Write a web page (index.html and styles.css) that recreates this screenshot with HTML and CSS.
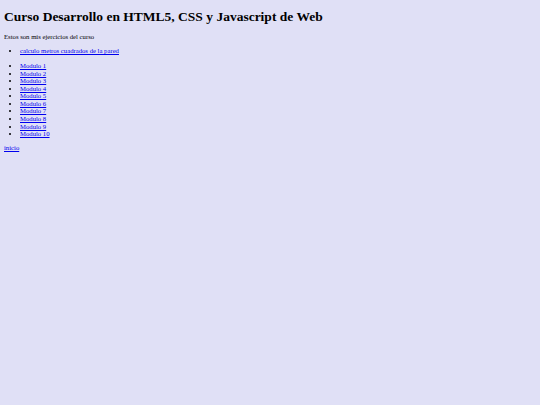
FILE: index.html
```html
<!DOCTYPE html>
<html>
<head>
<meta charset="utf-8">
<link rel="stylesheet" href="styles.css">
</head>
<body>
<h1 class="title">Curso Desarrollo en HTML5, CSS y Javascript de Web</h1>
<p class="intro">Estos son mis ejercicios del curso</p>
<ul class="list">
<li><a href="#">calculo metros cuadrados de la pared</a></li>
</ul>
<ul class="list">
<li><a href="#">Modulo 1</a></li>
<li><a href="#">Modulo 2</a></li>
<li><a href="#">Modulo 3</a></li>
<li><a href="#">Modulo 4</a></li>
<li><a href="#">Modulo 5</a></li>
<li><a href="#">Modulo 6</a></li>
<li><a href="#">Modulo 7</a></li>
<li><a href="#">Modulo 8</a></li>
<li><a href="#">Modulo 9</a></li>
<li><a href="#">Modulo 10</a></li>
</ul>
<a class="home" href="#">inicio</a>
</body>
</html>
```
FILE: styles.css
```css
html {
  background: #e0e0f6;
}
body {
  margin: 4px;
  font-family: "Liberation Serif", "Times New Roman", serif;
  font-size: 6.7px;
  line-height: 7.55px;
  color: #000;
}
.title {
  font-size: 13.5px;
  line-height: 15.5px;
  font-weight: bold;
  margin: 4.5px 0 9px;
}
.intro {
  margin: 9px 0 6.5px;
}
.list {
  margin: 6.7px 0;
  padding-left: 16px;
}
.list + .list {
  margin-top: 7.4px;
}
a {
  color: #0000ee;
}
.home {
  display: inline-block;
}
```
